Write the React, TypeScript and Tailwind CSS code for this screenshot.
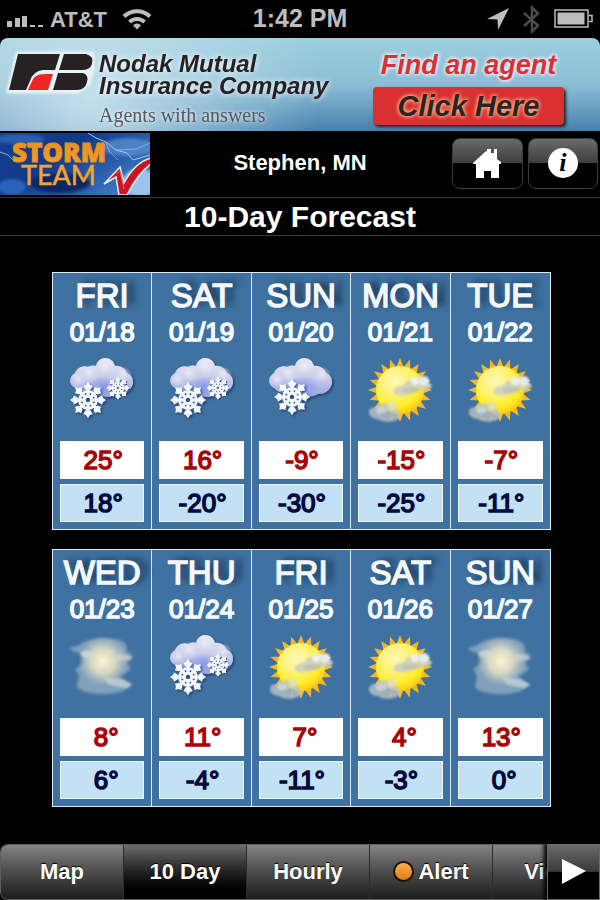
import React, { useState } from 'react';

type Condition = 'snow' | 'flurries' | 'sunny' | 'hazy';

interface ForecastDay {
  day: string;
  date: string;
  condition: Condition;
  high: number;
  low: number;
}

const firstWeek: ForecastDay[] = [
  { day: 'FRI', date: '01/18', condition: 'snow', high: 25, low: 18 },
  { day: 'SAT', date: '01/19', condition: 'snow', high: 16, low: -20 },
  { day: 'SUN', date: '01/20', condition: 'flurries', high: -9, low: -30 },
  { day: 'MON', date: '01/21', condition: 'sunny', high: -15, low: -25 },
  { day: 'TUE', date: '01/22', condition: 'sunny', high: -7, low: -11 },
];

const secondWeek: ForecastDay[] = [
  { day: 'WED', date: '01/23', condition: 'hazy', high: 8, low: 6 },
  { day: 'THU', date: '01/24', condition: 'snow', high: 11, low: -4 },
  { day: 'FRI', date: '01/25', condition: 'sunny', high: 7, low: -11 },
  { day: 'SAT', date: '01/26', condition: 'sunny', high: 4, low: -3 },
  { day: 'SUN', date: '01/27', condition: 'hazy', high: 13, low: 0 },
];

const tabs = ['Map', '10 Day', 'Hourly', 'Alert', 'Video'];

// Gradients and filters shared by all the weather icons
const IconDefs = () => (
  <svg width="0" height="0" className="absolute" aria-hidden="true">
    <defs>
      <linearGradient id="cloudBody" x1="0" y1="0" x2="0" y2="1">
        <stop offset="0" stopColor="#e9e9f6" />
        <stop offset="0.5" stopColor="#c9cdea" />
        <stop offset="1" stopColor="#98a6df" />
      </linearGradient>
      <radialGradient id="puff" cx="0.5" cy="0.4" r="0.5">
        <stop offset="0" stopColor="#f4f3fb" stopOpacity="0.7" />
        <stop offset="1" stopColor="#dcdcf0" stopOpacity="0" />
      </radialGradient>
      <radialGradient id="cloudBlue" cx="0.5" cy="0.5" r="0.5">
        <stop offset="0" stopColor="#8b95ec" />
        <stop offset="1" stopColor="#8b95ec" stopOpacity="0" />
      </radialGradient>
      <radialGradient id="sunDisc" cx="0.4" cy="0.32" r="0.7">
        <stop offset="0" stopColor="#fff7bb" />
        <stop offset="0.4" stopColor="#fff27a" />
        <stop offset="0.75" stopColor="#ffee28" />
        <stop offset="1" stopColor="#fdc916" />
      </radialGradient>
      <radialGradient id="hazeGlow" cx="0.5" cy="0.5" r="0.5">
        <stop offset="0" stopColor="#fdf6d6" />
        <stop offset="0.5" stopColor="#e4dfc4" stopOpacity="0.85" />
        <stop offset="1" stopColor="#c3cdc6" stopOpacity="0" />
      </radialGradient>
      <filter id="soft" x="-20%" y="-20%" width="140%" height="140%">
        <feGaussianBlur stdDeviation="1" />
      </filter>
      <filter id="softer" x="-20%" y="-20%" width="140%" height="140%">
        <feGaussianBlur stdDeviation="1.8" />
      </filter>
      <filter id="drop" x="-20%" y="-20%" width="150%" height="150%">
        <feDropShadow dx="1.5" dy="1.5" stdDeviation="1" floodColor="#16306a" floodOpacity="0.8" />
      </filter>
    </defs>
  </svg>
);

const Cloud = () => (
  <g filter="url(#drop)">
    <path
      d="M6 32C-1 29 0 20 6 17C8 12 14 9 19 11C21 10 24 9 27 10C28 5 32 2 36 2C41 2 45 5 46 10C51 9 56 12 58 17C64 19 66 27 62 32C59 37 54 38 50 38C44 42 30 42 25 37C19 38 10 37 6 32Z"
      fill="url(#cloudBody)"
    />
    <circle cx="36" cy="12" r="10" fill="url(#puff)" />
    <circle cx="20" cy="19" r="10" fill="url(#puff)" />
    <circle cx="9" cy="25" r="8" fill="url(#puff)" />
    <circle cx="54" cy="20" r="9" fill="url(#puff)" />
    <ellipse cx="35" cy="31" rx="17" ry="11" fill="url(#cloudBlue)" />
  </g>
);

const Snowflake = ({ x, y, scale }: { x: number; y: number; scale: number }) => (
  <g transform={`translate(${x} ${y}) scale(${scale})`} filter="url(#drop)">
    {[0, 45, 90, 135, 180, 225, 270, 315].map((angle) => (
      <g key={angle} transform={`rotate(${angle})`} fill="#f3f8ff">
        <rect x="-1.6" y="-14" width="3.2" height="11" />
        <path d="M0 -18L2 -15L4.500 -14L2.500 -10.500H-2.500L-4.500 -14L-2 -15Z" />
      </g>
    ))}
    <circle r="8.5" fill="none" stroke="#f3f8ff" strokeWidth="2.6" />
    <circle r="3.6" fill="none" stroke="#f3f8ff" strokeWidth="2.6" />
  </g>
);

const sunRays = Array.from({ length: 40 }, (_, i) => {
  const radius = i % 2 === 0 ? 32 : 23;
  const angle = (i * Math.PI) / 20 - Math.PI / 2;
  return `${(33 + radius * Math.cos(angle)).toFixed(1)},${(34 + radius * Math.sin(angle)).toFixed(1)}`;
}).join(' ');

const WeatherIcon = ({ condition }: { condition: Condition }) => (
  <svg viewBox="0 0 66 66" className="mx-auto mt-2 size-[66px] overflow-visible" role="img" aria-label={condition}>
    {condition === 'snow' && (
      <>
        <Cloud />
        <Snowflake x={49} y={32} scale={0.65} />
        <Snowflake x={19} y={44} scale={1} />
      </>
    )}
    {condition === 'flurries' && (
      <>
        <Cloud />
        <Snowflake x={24} y={41} scale={1} />
      </>
    )}
    {condition === 'sunny' && (
      <>
        <polygon points={sunRays} fill="#f8b81c" />
        <circle cx="33" cy="34" r="24" fill="url(#sunDisc)" />
        <g filter="url(#soft)" fill="#d6dbda">
          <path d="M26 36C27 31 33 30 37 29C38 25 42 24 45 24C48 20 52 20 55 22C59 19 63 23 62 27C67 29 64 34 60 33C56 34 53 33 50 35C45 39 30 42 26 36Z" fill="#cfd2bd" opacity="0.95" />
          <circle cx="48" cy="25" r="4" fill="#eef0ea" />
          <circle cx="57" cy="25" r="5" fill="#e6eaec" />
          <ellipse cx="44" cy="34" rx="9" ry="3" fill="#b9bfa8" opacity="0.7" />
          <path d="M2 56C2 51 8 51 10 51C13 46 19 47 21 48C26 44 31 49 29 53C34 55 35 62 30 64C23 67 15 66 11 63C6 63 2 60 2 56Z" fill="#b9c4c4" opacity="0.8" />
          <circle cx="25" cy="50" r="4" fill="#e0e0b8" />
          <ellipse cx="14" cy="54" rx="5" ry="4" fill="#c8d2d8" />
          <ellipse cx="21" cy="59" rx="8" ry="3" fill="#9aacb6" opacity="0.7" />
        </g>
      </>
    )}
    {condition === 'hazy' && (
      <>
        <g filter="url(#softer)" fill="#a5b9c9">
          <path d="M12 11C20 4 44 4 52 8C58 10 60 16 56 20H14C8 20 2 18 1 15C4 13 8 14 12 11Z" opacity="0.65" />
          <path d="M12 19H60L64 24L58 30L62 36L54 42H10L6 36L14 30Z" opacity="0.65" />
          <path d="M10 42L48 41L63 52L54 58C40 63 14 62 8 54Z" opacity="0.65" />
        </g>
        <g filter="url(#soft)" fill="#cbd6dc">
          <path d="M11 20C16 16 22 18 26 20L20 25C15 24 12 24 11 20Z" opacity="0.8" />
          <path d="M48 22C54 20 60 22 63 25C60 28 54 27 48 28Z" opacity="0.7" />
          <path d="M34 44L52 46L63 51L58 55L40 52Z" opacity="0.7" />
        </g>
        <circle cx="34" cy="28" r="25" fill="url(#hazeGlow)" />
      </>
    )}
  </svg>
);

// One digit temperatures sit slightly right of centre
const padFor = (value: number) => (value >= 0 && value < 10 ? 'pl-2' : 'pl-0.5');

const DayColumn = ({ item }: { item: ForecastDay }) => (
  <li className="border-r border-[#dcebf5] px-[7px] pt-[3px] pb-[7px] text-center text-[26px] last:border-r-0">
    <h2 className="text-[33px] leading-10 whitespace-nowrap text-[#f4f7fa] [-webkit-text-stroke:1.5px_#f4f7fa] [text-shadow:7px_-2px_7px_#0c2240]">
      {item.day}
    </h2>
    <p className="leading-8 text-[#f6fbff] [-webkit-text-stroke:1.5px_#f6fbff]">{item.date}</p>
    <WeatherIcon condition={item.condition} />
    <p className={`mt-[19px] bg-white leading-[38px] text-[#a80508] [-webkit-text-stroke:1.5px_#a80508] ${padFor(item.high)}`}>
      {item.high}°
    </p>
    <p
      className={`mt-[5px] border border-[#eef8ff] bg-[#c3e1f5] leading-9 text-[#05083c] [-webkit-text-stroke:1.5px_#05083c] ${padFor(item.low)}`}
    >
      {item.low}°
    </p>
  </li>
);

const ForecastPanel = ({ days }: { days: ForecastDay[] }) => (
  <ul className="grid grid-cols-5 border border-[#dcebf5] bg-[#3f72a0]">
    {days.map((item) => (
      <DayColumn key={item.date} item={item} />
    ))}
  </ul>
);

const StatusBar = () => (
  <div className="grid h-[38px] grid-cols-[1fr_auto_1fr] items-center px-[7px] text-[#bdbdbd]">
    <div className="flex items-center gap-[7px]">
      <svg width="36" height="12" viewBox="0 0 36 12" fill="currentColor" className="mt-3 mb-2" aria-hidden="true">
        <rect x="0" y="6" width="5" height="6" />
        <rect x="8" y="3" width="5" height="9" />
        <rect x="15" y="1" width="5" height="11" />
        <rect x="23" y="10" width="5" height="2" />
        <rect x="31" y="10" width="5" height="2" />
      </svg>
      <span className="text-[22px] font-bold">AT&amp;T</span>
      <svg width="30" height="22" viewBox="0 0 30 22" fill="none" stroke="currentColor" strokeWidth="4" className="ml-2" aria-hidden="true">
        <path d="M2 8.500a18.500 18.500 0 0 1 26 0" />
        <path d="M7.500 14a10.800 10.800 0 0 1 15 0" />
        <path d="M15 21.500l-4-4.200a5.600 5.600 0 0 1 8 0z" fill="currentColor" stroke="none" />
      </svg>
    </div>
    <span className="text-[25px] font-bold">1:42 PM</span>
    <div className="flex items-center justify-end gap-[14px]">
      <svg width="22" height="22" viewBox="0 0 22 22" fill="currentColor" aria-hidden="true">
        <path d="M22 0L11 22L10.500 11.500L0 11Z" />
      </svg>
      <svg width="17" height="29" viewBox="0 0 17 29" fill="none" stroke="#4b4b4b" strokeWidth="2.500" aria-hidden="true">
        <path d="M1 8L15 20.500L9 26.500V2.500L15 8.500L1 21" />
      </svg>
      <svg width="39" height="20" viewBox="0 0 39 20" fill="none" stroke="currentColor" aria-hidden="true">
        <rect x="1" y="1" width="33" height="17" strokeWidth="1.500" />
        <path d="M35 6.500h3v6h-3" strokeWidth="1.500" />
        <rect x="3.500" y="3.500" width="27" height="12" fill="currentColor" stroke="none" />
      </svg>
    </div>
  </div>
);

const FarmBureauMark = () => (
  <svg width="86" height="41" viewBox="0 0 86 41" className="shrink-0 overflow-visible" aria-hidden="true">
    <path
      d="M10 1H84V17L80 30L70 38H1Z"
      fill="#e6f3f7"
      stroke="#e6f3f7"
      strokeWidth="5"
      strokeLinejoin="round"
      filter="url(#soft)"
    />
    <path d="M10 1H52L47 17H35Q25 18 22 28L18 37H1Z" fill="#272123" />
    <path d="M56 1H78Q86 3 84 11Q82 17 74 17H51Z" fill="#272123" />
    <path d="M50 20H75Q81 22 79 29Q77 37 69 37H45Z" fill="#272123" />
    <path d="M36 21H45L40 37H20L24 28Q27 21 36 21Z" fill="#ee2626" />
  </svg>
);

const AdBanner = () => (
  <a
    href="#agent"
    className="flex h-[93px] justify-between rounded-t-lg bg-[radial-gradient(circle_at_15%_60%,#c4dfec_0%,#c4dfec00_45%),linear-gradient(#9bcfdd,#8cbdd5_50%,#4580ac)] pr-9 pl-2"
  >
    <div className="flex pt-[15px]">
      <FarmBureauMark />
      <div className="pl-[5px] whitespace-nowrap">
        <p className="text-[24px] leading-[22px] font-bold text-[#272123] italic drop-shadow-[0_0_3px_#fff]">
          Nodak Mutual
          <br />
          Insurance Company
        </p>
        <p className="mt-[7px] font-['Liberation_Serif',serif] text-[20px] leading-[22px] text-[#54585f] drop-shadow-[0_0_2px_#fff]">
          Agents with answers
        </p>
      </div>
    </div>
    <div className="w-[191px] text-center italic">
      <p className="pt-3 text-[27px] leading-[30px] font-bold whitespace-nowrap text-[#d83038] [text-shadow:0_0_4px_#fff,0_0_4px_#fff]">
        Find an agent
      </p>
      <p className="mt-[7px] rounded-sm bg-[#d93131] text-[29px] leading-[38px] font-bold text-[#2b2424] shadow-[2px_2px_3px_#222] [text-shadow:0_0_4px_#ffb98a,0_0_4px_#ffb98a]">
        Click Here
      </p>
    </div>
  </a>
);

const StormTeamLogo = () => (
  <svg viewBox="0 0 150 62" className="h-[62px] w-[150px]" role="img" aria-label="Storm Team V">
    <defs>
      <linearGradient id="stormSky" x1="0" y1="0" x2="1" y2="0.6">
        <stop offset="0" stopColor="#163f97" />
        <stop offset="0.45" stopColor="#123a86" />
        <stop offset="1" stopColor="#3b77c2" />
      </linearGradient>
      <linearGradient id="stormGold" x1="0" y1="0" x2="0" y2="1">
        <stop offset="0" stopColor="#e88a1c" />
        <stop offset="1" stopColor="#f2a62c" />
      </linearGradient>
    </defs>
    <rect width="150" height="62" fill="url(#stormSky)" />
    <g filter="url(#softer)">
      <ellipse cx="128" cy="14" rx="26" ry="9" fill="#5a95d2" opacity="0.7" />
      <ellipse cx="20" cy="6" rx="24" ry="5" fill="#3068b8" opacity="0.8" />
      <ellipse cx="60" cy="50" rx="30" ry="10" fill="#0b2566" />
      <ellipse cx="140" cy="50" rx="18" ry="14" fill="#b4d6f2" opacity="0.8" />
      <ellipse cx="12" cy="54" rx="14" ry="8" fill="#2a63bb" />
    </g>
    <g fill="none" stroke="#a4c9ee">
      <path d="M88 0L96 5L106 9L116 17L127 20L133 27L150 22" />
      <path d="M116 17L136 16L150 10" opacity="0.6" />
      <path d="M0 19L8 22L13 27" opacity="0.8" />
      <path d="M106 9L109 18L118 27" opacity="0.6" />
    </g>
    <text x="12" y="29" fontFamily="Open Sans, sans-serif" fontWeight="800" fontSize="26" fill="url(#stormGold)" stroke="#e88f20">
      STORM
    </text>
    <text x="21" y="52" fontFamily="Lato, sans-serif" fontSize="27" fill="#f0a436" stroke="#f0a436" strokeWidth="0.500">
      TEAM
    </text>
    <path d="M104 51L120 34L124 50C131 37 140 28 151 25V31C141 38 133 50 127 62H119L116 44Z" fill="#cc1522" stroke="#e4edf8" strokeWidth="1.500" />
    <path d="M117 41L120 38L124 56" fill="none" stroke="#f06068" />
  </svg>
);

const headerButton =
  'flex h-[51px] flex-1 items-center justify-center rounded-lg border border-[#3c3c3c] bg-linear-to-b from-[#6b6b6b] via-[#3e3e3e] via-49% to-black to-50%';

const App: React.FC = () => {
  const [activeTab, setActiveTab] = useState('10 Day');

  return (
    <div className="flex min-h-screen flex-col bg-black font-['Liberation_Sans',Arial,sans-serif] text-white">
      <IconDefs />
      <StatusBar />
      <AdBanner />

      <header className="grid h-[67px] grid-cols-[150px_1fr_150px] items-center border-b border-[#3a3a3a]">
        <StormTeamLogo />
        <p className="pb-[3px] text-center text-[22px] font-bold">Stephen, MN</p>
        <div className="flex gap-[5px] pr-0.5 pb-0.5 pl-0.5">
          <button type="button" aria-label="Home" className={headerButton}>
            <svg width="28" height="29" viewBox="0 0 28 29" fill="white" aria-hidden="true">
              <path d="M12 3L0 14V15H3V29H11V22H18V29H26V15H28V13L24 10V0H21V4H18V0H14V2Z" />
            </svg>
          </button>
          <button type="button" aria-label="Information" className={headerButton}>
            <span className="flex size-[30px] items-center justify-center rounded-full bg-white font-['Liberation_Serif',serif] text-[26px] leading-none font-bold text-black italic">
              i
            </span>
          </button>
        </div>
      </header>

      <h1 className="border-b border-[#3a3a3a] text-center text-[30px] leading-[37px] font-bold">10-Day Forecast</h1>

      <main className="flex flex-1 flex-col gap-[19px] pt-9 pr-[49px] pl-[52px]">
        <ForecastPanel days={firstWeek} />
        <ForecastPanel days={secondWeek} />
      </main>

      <nav className="flex h-14 bg-black">
        <div className="flex min-w-0 flex-1 overflow-hidden rounded-l-lg border-y border-l border-[#5d5d5d]">
          {tabs.map((tab) => (
            <button
              key={tab}
              type="button"
              onClick={() => setActiveTab(tab)}
              className={`flex w-[123px] shrink-0 items-center justify-center gap-1 border-r border-[#2c2c2c] bg-linear-to-b pb-0.5 text-[22px] font-bold [text-shadow:0_-1px_1px_#000] ${
                activeTab === tab ? 'from-[#6c6c6c] via-[#222] to-black' : 'from-[#848484] via-[#4c4c4c] to-[#1d1d1d]'
              }`}
            >
              {tab === 'Alert' && (
                <span className="size-[21px] rounded-full border-2 border-[#1d1206] bg-linear-to-b from-[#fbb04c] to-[#e07c0c]" />
              )}
              {tab}
            </button>
          ))}
        </div>
        <button
          type="button"
          aria-label="More tabs"
          className="z-10 flex w-[53px] items-center justify-center border border-[#6a6a6a] bg-linear-to-b from-[#6b6b6b] via-[#3a3a3a] via-49% to-black to-50% shadow-[-2px_0_4px_1px_#000]"
        >
          <svg width="24" height="26" viewBox="0 0 24 26" fill="white" aria-hidden="true">
            <path d="M0 0L24 12L0 25Z" />
          </svg>
        </button>
      </nav>
    </div>
  );
};

export default App;
